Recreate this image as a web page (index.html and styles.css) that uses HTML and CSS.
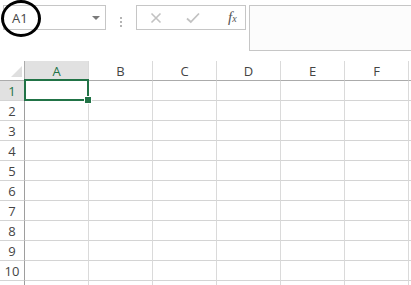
FILE: index.html
```html
<!doctype html>
<html lang="en">
<head>
	<meta charset="utf-8">
	<title>Sheet</title>
	<link rel="stylesheet" href="styles.css">
</head>
<body>
	<div class="toolbar">
		<div class="namebox">
			<span class="ref">A1</span>
			<span class="drop"></span>
		</div>
		<div class="grip"><i></i><i></i><i></i></div>
		<div class="fbuttons">
			<svg width="12" height="12" viewBox="0 0 12 12" aria-hidden="true">
				<path d="M1.5,1.5L10.5,10.5M10.5,1.5L1.5,10.5" stroke="#c2c2c2" stroke-width="1.6" fill="none"/>
			</svg>
			<svg width="14" height="12" viewBox="0 0 14 12" aria-hidden="true">
				<path d="M1,6.5L4.8,10L13,1.5" stroke="#c2c2c2" stroke-width="1.8" fill="none"/>
			</svg>
			<span class="fx">f<sub>x</sub></span>
		</div>
		<div class="formula"></div>
		<div class="ring"></div>
	</div>

	<div class="sheet">
		<div class="corner"><span></span></div>
		<div class="colhead on">A</div>
		<div class="colhead">B</div>
		<div class="colhead">C</div>
		<div class="colhead">D</div>
		<div class="colhead">E</div>
		<div class="colhead">F</div>
		<div class="colhead"></div>

		<div class="rowhead on">1</div>
		<div class="cell active"><span class="handle"></span></div><div class="cell"></div><div class="cell"></div><div class="cell"></div><div class="cell"></div><div class="cell"></div><div class="cell"></div>
		<div class="rowhead">2</div>
		<div class="cell"></div><div class="cell"></div><div class="cell"></div><div class="cell"></div><div class="cell"></div><div class="cell"></div><div class="cell"></div>
		<div class="rowhead">3</div>
		<div class="cell"></div><div class="cell"></div><div class="cell"></div><div class="cell"></div><div class="cell"></div><div class="cell"></div><div class="cell"></div>
		<div class="rowhead">4</div>
		<div class="cell"></div><div class="cell"></div><div class="cell"></div><div class="cell"></div><div class="cell"></div><div class="cell"></div><div class="cell"></div>
		<div class="rowhead">5</div>
		<div class="cell"></div><div class="cell"></div><div class="cell"></div><div class="cell"></div><div class="cell"></div><div class="cell"></div><div class="cell"></div>
		<div class="rowhead">6</div>
		<div class="cell"></div><div class="cell"></div><div class="cell"></div><div class="cell"></div><div class="cell"></div><div class="cell"></div><div class="cell"></div>
		<div class="rowhead">7</div>
		<div class="cell"></div><div class="cell"></div><div class="cell"></div><div class="cell"></div><div class="cell"></div><div class="cell"></div><div class="cell"></div>
		<div class="rowhead">8</div>
		<div class="cell"></div><div class="cell"></div><div class="cell"></div><div class="cell"></div><div class="cell"></div><div class="cell"></div><div class="cell"></div>
		<div class="rowhead">9</div>
		<div class="cell"></div><div class="cell"></div><div class="cell"></div><div class="cell"></div><div class="cell"></div><div class="cell"></div><div class="cell"></div>
		<div class="rowhead">10</div>
		<div class="cell"></div><div class="cell"></div><div class="cell"></div><div class="cell"></div><div class="cell"></div><div class="cell"></div><div class="cell"></div>
		<div class="rowhead"></div>
		<div class="cell"></div><div class="cell"></div><div class="cell"></div><div class="cell"></div><div class="cell"></div><div class="cell"></div><div class="cell"></div>
	</div>
</body>
</html>
```

FILE: styles.css
```css
body {
	margin: 0;
	width: 411px;
	height: 285px;
	background-color: #ffffff;
	font-family: "Open Sans", "Liberation Sans", sans-serif;
	color: #444444;
	overflow: hidden;
}

.toolbar {
	position: relative;
	display: flex;
	align-items: flex-start;
	height: 61px;
	padding: 5px 0 0 3px;
	box-sizing: border-box;
}

.namebox {
	display: flex;
	align-items: center;
	justify-content: space-between;
	width: 103px;
	height: 25px;
	border: 1px solid #c6c6c6;
	box-sizing: border-box;
	padding: 0 5px 0 8px;
}

.ref {
	font-size: 13px;
	color: #444444;
}

.drop {
	width: 0;
	height: 0;
	border-left: 4px solid transparent;
	border-right: 4px solid transparent;
	border-top: 4px solid #7a7a7a;
	margin-top: 1px;
}

.grip {
	display: flex;
	flex-direction: column;
	align-items: center;
	gap: 2px;
	width: 30px;
	padding-top: 12px;
}

.grip i {
	width: 2px;
	height: 2px;
	background-color: #b4b4b4;
}

.fbuttons {
	display: flex;
	align-items: center;
	width: 110px;
	height: 25px;
	border: 1px solid #c6c6c6;
	box-sizing: border-box;
	padding-left: 13px;
	gap: 23px;
}

.fbuttons svg:nth-child(2) {
	margin-left: 1px;
}

.fx {
	font-family: "Liberation Serif", serif;
	font-style: italic;
	font-size: 15px;
	color: #555555;
	margin-left: 5px;
}

.fx sub {
	font-size: 10px;
	vertical-align: 0;
}

.formula {
	flex: 1;
	margin-left: 3px;
	height: 46px;
	border: 1px solid #c6c6c6;
	border-right: 0;
	box-sizing: border-box;
	background-color: #fcfcfc;
}

.ring {
	position: absolute;
	left: 1px;
	top: 0;
	width: 40px;
	height: 37px;
	border: 3.5px solid #000000;
	border-radius: 50%;
	box-sizing: border-box;
}

.sheet {
	display: grid;
	grid-template-columns: 25px repeat(7, 64px);
	grid-auto-rows: 20px;
	height: 224px;
	overflow: hidden;
	font-size: 13px;
}

.corner,
.colhead,
.rowhead,
.cell {
	box-sizing: border-box;
	border-right: 1px solid #dadada;
	border-bottom: 1px solid #d4d4d4;
}

.corner {
	position: relative;
	border-bottom-color: #ababab;
	border-right-color: #ababab;
}

.corner span {
	position: absolute;
	right: 2px;
	bottom: 3px;
	width: 0;
	height: 0;
	border-left: 11px solid transparent;
	border-bottom: 11px solid #dfdfdf;
}

.colhead {
	display: flex;
	align-items: center;
	justify-content: center;
	border-bottom-color: #ababab;
	color: #444444;
}

.rowhead {
	display: flex;
	align-items: center;
	justify-content: center;
	border-right-color: #9e9e9e;
	color: #444444;
}

.colhead.on,
.rowhead.on {
	background-color: #e1e1e1;
	color: #217346;
}

.cell.active {
	position: relative;
}

.cell.active::before {
	content: "";
	position: absolute;
	left: -1px;
	top: -2px;
	right: -1px;
	bottom: -1px;
	border: 2px solid #217346;
}

.handle {
	position: absolute;
	right: -4px;
	bottom: -4px;
	width: 6px;
	height: 6px;
	background-color: #217346;
	border: 1px solid #ffffff;
	z-index: 1;
}
```
